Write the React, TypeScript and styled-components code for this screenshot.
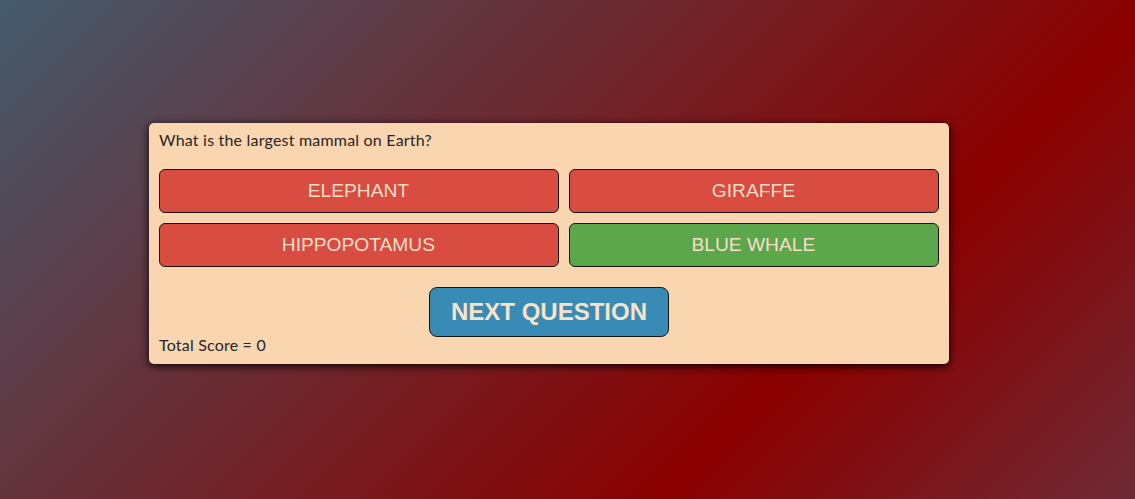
import React from "react";
import styled, { createGlobalStyle } from "styled-components";

const GlobalStyle = createGlobalStyle`
  html, body {
    margin: 0;
    padding: 0;
    height: 100%;
  }
  body {
    background: linear-gradient(135deg, #455b6c 0%, #8b0000 71%, #6d2a36 100%);
    font-family: Lato, "Open Sans", sans-serif;
  }
  #root {
    min-height: 100vh;
  }
`;

const Page = styled.main`
  box-sizing: border-box;
  min-height: 100vh;
  padding: 123px 0 0 149px;
`;

const Card = styled.section`
  box-sizing: border-box;
  width: 800px;
  height: 241px;
  padding: 7px 10px 10px;
  background: #f9d6b0;
  border-radius: 5px;
  box-shadow: 0 2px 9px rgba(0, 0, 0, 0.95);
  display: flex;
  flex-direction: column;
`;

const Question = styled.p`
  margin: 0 0 19px;
  font-size: 16px;
  line-height: 20px;
  color: #2a2424;
  letter-spacing: 0.2px;
`;

const Answers = styled.div`
  display: grid;
  grid-template-columns: auto auto;
  gap: 10px;
`;

const Answer = styled.button<{ $correct?: boolean }>`
  box-sizing: border-box;
  height: 44px;
  padding: 0 10px 0 9px;
  border: 1px solid #1a1414;
  border-radius: 6px;
  background: ${(p) => (p.$correct ? "#5ca64c" : "#d94c42")};
  color: #f9dfc6;
  font-family: "Liberation Sans", Arial, sans-serif;
  font-size: 19.2px;
  line-height: 22px;
  cursor: pointer;
`;

const NextButton = styled.button`
  align-self: center;
  box-sizing: border-box;
  margin-top: 20px;
  height: 50px;
  padding: 0 20.5px;
  border: 1px solid #161616;
  border-radius: 8px;
  background: #378bb5;
  color: #f9e2ca;
  font-family: "Liberation Sans", Arial, sans-serif;
  font-weight: bold;
  font-size: 24px;
  cursor: pointer;
`;

const Score = styled.p`
  margin: 0;
  font-size: 16px;
  line-height: 15px;
  color: #2a2424;
  letter-spacing: 0.2px;
`;

const answers = [
  { text: "ELEPHANT", correct: false },
  { text: "GIRAFFE", correct: false },
  { text: "HIPPOPOTAMUS", correct: false },
  { text: "BLUE WHALE", correct: true },
];

export default function App() {
  return (
    <>
      <GlobalStyle />
      <Page>
        <Card>
          <Question>What is the largest mammal on Earth?</Question>
          <Answers>
            {answers.map((a) => (
              <Answer key={a.text} $correct={a.correct}>
                {a.text}
              </Answer>
            ))}
          </Answers>
          <NextButton>NEXT QUESTION</NextButton>
          <Score>Total Score = 0</Score>
        </Card>
      </Page>
    </>
  );
}
